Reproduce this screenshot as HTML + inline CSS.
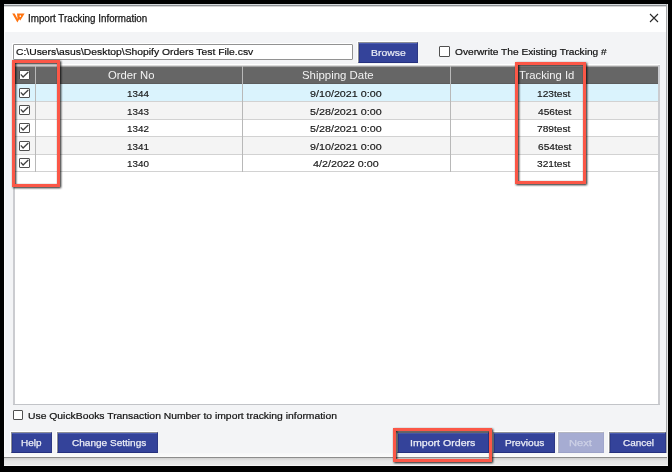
<!DOCTYPE html>
<html><head><meta charset="utf-8">
<style>
*{margin:0;padding:0;box-sizing:border-box}
html,body{width:672px;height:472px;overflow:hidden;background:#000;font-family:"Liberation Sans",sans-serif}
div{position:absolute}
.tx{white-space:nowrap;transform-origin:0 0}
.btn{background:#34439a;border:1px solid #8c8e96;border-right-color:#2d3884;border-bottom-color:#25307e;box-shadow:-1px -1px 0 #fff,inset 0 1px 0 #4d5db2,inset 1px 0 0 #2c3a8e}
.cb{width:11px;height:10px;border:1px solid #505050;background:#fff;border-radius:1px}
.red{border:3px solid #fb5747;filter:drop-shadow(1.6px 1.6px 1.1px rgba(0,0,0,.9))}
.hl{height:1px;background:#d2d2d2}
.vl{width:1px;background:#c6c6c6}
</style></head><body>
<!-- dialog frame -->
<div style="left:4px;top:4px;width:664px;height:462px;background:#f3f4f6"></div>
<div style="left:4px;top:4px;width:664px;height:1px;background:#d6d9dc"></div>
<div style="left:4px;top:5px;width:664px;height:1px;background:#8e9296"></div>
<div style="left:4px;top:6px;width:663px;height:1px;background:#d8d8d8"></div>
<div style="left:4px;top:7px;width:662px;height:25px;background:#fff"></div>
<div style="left:4px;top:7px;width:1px;height:459px;background:#fbfbfb"></div>
<div style="left:666px;top:4px;width:1px;height:462px;background:#a8aaac"></div>
<div style="left:667px;top:4px;width:1px;height:462px;background:#e6e6e6"></div>
<div style="left:4px;top:453px;width:663px;height:4px;background:linear-gradient(#f6f7f8,#fbfbfb)"></div>
<div style="left:4px;top:457px;width:663px;height:1px;background:#8c8c8c"></div>
<div style="left:4px;top:458px;width:663px;height:7px;background:linear-gradient(#cfcfcf,#e4e4e4 40%,#e9e9e9)"></div>
<div style="left:4px;top:465px;width:664px;height:1px;background:#f4f4f4"></div>

<!-- path textbox -->
<div style="left:13px;top:44px;width:340px;height:16px;background:#fff;border:1px solid #929292;border-radius:1px;box-shadow:-1px -1px 0 #fff"></div>
<div class="btn" style="left:358px;top:42px;width:60px;height:21px"></div>
<div class="cb" style="left:439px;top:46px;height:11px"></div>

<!-- grid -->
<div style="left:13px;top:64px;width:647px;height:341px;background:#fff"></div>
<div style="left:13px;top:65px;width:2px;height:340px;background:#cbccd0"></div>
<div style="left:658px;top:65px;width:2px;height:340px;background:#cbccd0"></div>
<div style="left:13px;top:404px;width:647px;height:1px;background:#c2c4c8"></div>
<div style="left:15px;top:65px;width:643px;height:1px;background:#dadada"></div>
<div style="left:15px;top:66px;width:643px;height:1px;background:#a2a2a2"></div>
<div style="left:15px;top:67px;width:643px;height:17px;background:linear-gradient(#6c6c6c 0,#666 1px,#666 16px,#5c5c5c 16px)"></div>
<div style="left:15px;top:84px;width:643px;height:17px;background:#daf3fd"></div>
<div style="left:15px;top:101px;width:643px;height:18px;background:#f4f4f4"></div>
<div style="left:15px;top:136px;width:643px;height:18px;background:#f4f4f4"></div>
<div class="hl" style="left:15px;top:101px;width:643px"></div>
<div class="hl" style="left:15px;top:119px;width:643px"></div>
<div class="hl" style="left:15px;top:136px;width:643px"></div>
<div class="hl" style="left:15px;top:154px;width:643px"></div>
<div class="hl" style="left:15px;top:171px;width:643px"></div>
<div class="vl" style="left:35px;top:66px;height:106px;background:#b8b8b8"></div>
<div class="vl" style="left:57px;top:66px;height:106px;background:#b8b8b8"></div>
<div class="vl" style="left:242px;top:66px;height:106px;background:#b8b8b8"></div>
<div class="vl" style="left:450px;top:66px;height:106px;background:#b8b8b8"></div>
<div class="cb" style="left:19px;top:70px"></div>
<div class="cb" style="left:19px;top:88px"></div>
<div class="cb" style="left:19px;top:105px"></div>
<div class="cb" style="left:19px;top:123px"></div>
<div class="cb" style="left:19px;top:141px"></div>
<div class="cb" style="left:19px;top:158px"></div>

<!-- bottom -->
<div class="cb" style="left:13px;top:410px;width:10px"></div>
<div class="btn" style="left:11px;top:432px;width:41px;height:21px"></div>
<div class="btn" style="left:57px;top:432px;width:101px;height:21px"></div>
<div class="btn" style="left:397px;top:432px;width:92px;height:21px"></div>
<div class="btn" style="left:493px;top:432px;width:62px;height:21px"></div>
<div class="btn" style="left:558px;top:432px;width:46px;height:21px;background:#a6acd2;border-color:#b4b6c0;border-bottom-color:#9ca2c8;border-right-color:#a0a6cc;box-shadow:-1px -1px 0 #fff"></div>
<div class="btn" style="left:609px;top:432px;width:57px;height:21px"></div>

<div class="tx" style="left:28.35px;top:14.00px;font-size:10.3px;line-height:10.3px;font-weight:normal;-webkit-text-stroke:0.25px currentColor;color:#141414;transform:scaleX(0.9516)">Import Tracking Information</div>
<div class="tx" style="left:16.40px;top:47.00px;font-size:9.6px;line-height:9.6px;font-weight:normal;-webkit-text-stroke:0.2px currentColor;color:#111;transform:scaleX(1.0782)">C:\Users\asus\Desktop\Shopify Orders Test File.csv</div>
<div class="tx" style="left:371.24px;top:47.50px;font-size:9.8px;line-height:9.8px;font-weight:normal;-webkit-text-stroke:0.2px currentColor;color:#eceef6;transform:scaleX(1.0625)">Browse</div>
<div class="tx" style="left:455.00px;top:47.00px;font-size:9.4px;line-height:9.4px;font-weight:normal;-webkit-text-stroke:0.2px currentColor;color:#111;transform:scaleX(1.0836)">Overwrite The Existing Tracking #</div>
<div class="tx" style="left:107.90px;top:70.00px;font-size:10.6px;line-height:10.6px;font-weight:normal;color:#f2f2f2;transform:scaleX(1.0651)">Order No</div>
<div class="tx" style="left:301.82px;top:70.00px;font-size:10.6px;line-height:10.6px;font-weight:normal;color:#f2f2f2;transform:scaleX(1.0769)">Shipping Date</div>
<div class="tx" style="left:519.00px;top:70.00px;font-size:10.6px;line-height:10.6px;font-weight:normal;color:#f2f2f2;transform:scaleX(1.0647)">Tracking Id</div>
<div class="tx" style="left:27.70px;top:411.00px;font-size:9.4px;line-height:9.4px;font-weight:normal;-webkit-text-stroke:0.2px currentColor;color:#111;transform:scaleX(1.1040)">Use QuickBooks Transaction Number to import tracking information</div>
<div class="tx" style="left:20.88px;top:438.00px;font-size:9.8px;line-height:9.8px;font-weight:normal;-webkit-text-stroke:0.25px currentColor;color:#eceef6;transform:scaleX(1.0158)">Help</div>
<div class="tx" style="left:71.60px;top:438.00px;font-size:9.8px;line-height:9.8px;font-weight:normal;-webkit-text-stroke:0.25px currentColor;color:#eceef6;transform:scaleX(1.0250)">Change Settings</div>
<div class="tx" style="left:409.72px;top:438.00px;font-size:9.8px;line-height:9.8px;font-weight:normal;-webkit-text-stroke:0.25px currentColor;color:#eceef6;transform:scaleX(1.0814)">Import Orders</div>
<div class="tx" style="left:504.77px;top:438.00px;font-size:9.8px;line-height:9.8px;font-weight:normal;-webkit-text-stroke:0.25px currentColor;color:#eceef6;transform:scaleX(1.0324)">Previous</div>
<div class="tx" style="left:569.26px;top:438.00px;font-size:9.8px;line-height:9.8px;font-weight:normal;-webkit-text-stroke:0.25px currentColor;color:#cdd1e6;transform:scaleX(1.1368)">Next</div>
<div class="tx" style="left:622.90px;top:438.00px;font-size:9.8px;line-height:9.8px;font-weight:normal;-webkit-text-stroke:0.25px currentColor;color:#eceef6;transform:scaleX(1.0167)">Cancel</div>
<div class="tx" style="left:126.85px;top:89.00px;font-size:9.4px;line-height:9.4px;color:#151515;-webkit-text-stroke:0.15px #151515;transform:scaleX(1.0500)">1344</div>
<div class="tx" style="left:310.30px;top:89.00px;font-size:9.4px;line-height:9.4px;color:#151515;-webkit-text-stroke:0.15px #151515;transform:scaleX(1.1452)">9/10/2021 0:00</div>
<div class="tx" style="left:536.97px;top:89.00px;font-size:9.4px;line-height:9.4px;color:#151515;-webkit-text-stroke:0.15px #151515;transform:scaleX(1.0833)">123test</div>
<div class="tx" style="left:126.85px;top:106.60px;font-size:9.4px;line-height:9.4px;color:#151515;-webkit-text-stroke:0.15px #151515;transform:scaleX(1.0500)">1343</div>
<div class="tx" style="left:309.73px;top:106.60px;font-size:9.4px;line-height:9.4px;color:#151515;-webkit-text-stroke:0.15px #151515;transform:scaleX(1.1452)">5/28/2021 0:00</div>
<div class="tx" style="left:537.51px;top:106.60px;font-size:9.4px;line-height:9.4px;color:#151515;-webkit-text-stroke:0.15px #151515;transform:scaleX(1.0833)">456test</div>
<div class="tx" style="left:126.85px;top:124.20px;font-size:9.4px;line-height:9.4px;color:#151515;-webkit-text-stroke:0.15px #151515;transform:scaleX(1.0500)">1342</div>
<div class="tx" style="left:309.73px;top:124.20px;font-size:9.4px;line-height:9.4px;color:#151515;-webkit-text-stroke:0.15px #151515;transform:scaleX(1.1452)">5/28/2021 0:00</div>
<div class="tx" style="left:536.97px;top:124.20px;font-size:9.4px;line-height:9.4px;color:#151515;-webkit-text-stroke:0.15px #151515;transform:scaleX(1.0833)">789test</div>
<div class="tx" style="left:126.85px;top:141.80px;font-size:9.4px;line-height:9.4px;color:#151515;-webkit-text-stroke:0.15px #151515;transform:scaleX(1.0500)">1341</div>
<div class="tx" style="left:310.30px;top:141.80px;font-size:9.4px;line-height:9.4px;color:#151515;-webkit-text-stroke:0.15px #151515;transform:scaleX(1.1452)">9/10/2021 0:00</div>
<div class="tx" style="left:537.51px;top:141.80px;font-size:9.4px;line-height:9.4px;color:#151515;-webkit-text-stroke:0.15px #151515;transform:scaleX(1.0833)">654test</div>
<div class="tx" style="left:126.85px;top:159.40px;font-size:9.4px;line-height:9.4px;color:#151515;-webkit-text-stroke:0.15px #151515;transform:scaleX(1.0500)">1340</div>
<div class="tx" style="left:313.16px;top:159.40px;font-size:9.4px;line-height:9.4px;color:#151515;-webkit-text-stroke:0.15px #151515;transform:scaleX(1.1452)">4/2/2022 0:00</div>
<div class="tx" style="left:536.97px;top:159.40px;font-size:9.4px;line-height:9.4px;color:#151515;-webkit-text-stroke:0.15px #151515;transform:scaleX(1.0833)">321test</div>

<svg style="position:absolute;left:0;top:0" width="672" height="472" viewBox="0 0 672 472">
<!-- logo -->
<path d="M12.2 13.5 L14.7 13.5 L17.6 19.0 L17.0 13.5 L24.6 13.5 L20.3 20.6 L19.2 19.3 L17.4 22.4 Z" fill="#ff7410"/>
<circle cx="20.3" cy="16.1" r="0.85" fill="#fff"/>
<!-- close -->
<path d="M650 14 L658 22 M658 14 L650 22" stroke="#2a2a2a" stroke-width="1.1"/>
<!-- checkmarks -->
<g stroke="#404040" stroke-width="1.3" fill="none" stroke-linecap="round">
<path d="M21.2 74.8 L23.1 77 L28 72.3"/>
<path d="M21.2 92.8 L23.1 95 L28 90.3"/>
<path d="M21.2 109.8 L23.1 112 L28 107.3"/>
<path d="M21.2 127.8 L23.1 130 L28 125.3"/>
<path d="M21.2 145.8 L23.1 148 L28 143.3"/>
<path d="M21.2 162.8 L23.1 165 L28 160.3"/>
</g>
</svg>

<!-- red highlight boxes -->
<div class="red" style="left:12px;top:60px;width:48px;height:127px"></div>
<div class="red" style="left:515px;top:62px;width:71px;height:122px"></div>
<div class="red" style="left:393px;top:428px;width:99px;height:34px"></div>
</body></html>
